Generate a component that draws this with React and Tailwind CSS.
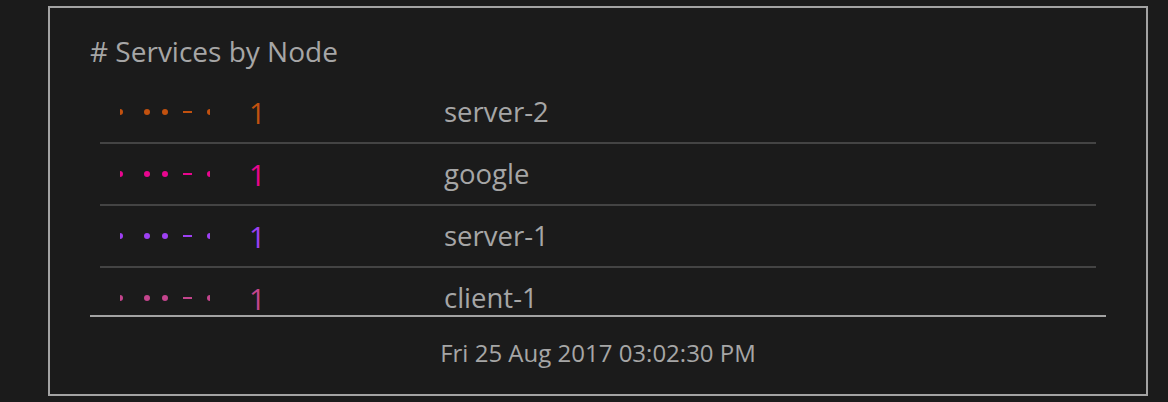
import React from 'react';

const rows = [
  { count: 1, node: 'server-2', color: '#c2510f' },
  { count: 1, node: 'google', color: '#e8068e' },
  { count: 1, node: 'server-1', color: '#9d40f2' },
  { count: 1, node: 'client-1', color: '#c4458d' },
];

// tiny dashed sparkline, clipped at both ends like the original
const Spark = ({ color }) => (
  <svg width="90" height="8" viewBox="0 0 90 8" className="block">
    <circle cx="0" cy="4" r="3" fill={color} />
    <circle cx="27" cy="4" r="3" fill={color} />
    <circle cx="45" cy="4" r="3" fill={color} />
    <rect x="63" y="3" width="9" height="2" fill={color} />
    <circle cx="90" cy="4" r="3" fill={color} />
  </svg>
);

const App = () => {
  return (
    <div
      className="w-[1168px] h-[402px] bg-[#1b1b1b] pt-[6px] pl-[48px]"
      style={{ fontFamily: '"Open Sans", "DejaVu Sans", sans-serif' }}
    >
      <div className="w-[1100px] h-[390px] border-2 border-[#a3a3a3] px-[40px] flex flex-col">
        <h2 className="text-[28px] leading-none text-[#a6a6a6] mt-[29px]">
          # Services by Node
        </h2>

        <div className="mt-[17px] h-[235px] overflow-hidden border-b-2 border-[#a3a3a3]">
          {rows.map((r, idx) => (
            <div
              key={idx}
              className="mx-[10px] h-[62px] flex items-center border-b-2 border-[#444444]"
            >
              <div className="w-[149px] pl-[20px]">
                <Spark color={r.color} />
              </div>
              <div
                className="w-[195px] text-[29px] leading-none"
                style={{ color: r.color }}
              >
                {r.count}
              </div>
              <div className="text-[27.5px] leading-none text-[#a6a6a6]">
                {r.node}
              </div>
            </div>
          ))}
        </div>

        <div className="mt-[24px] text-center text-[24px] leading-none text-[#a6a6a6]">
          Fri 25 Aug 2017 03:02:30 PM
        </div>
      </div>
    </div>
  );
};

export default App;
